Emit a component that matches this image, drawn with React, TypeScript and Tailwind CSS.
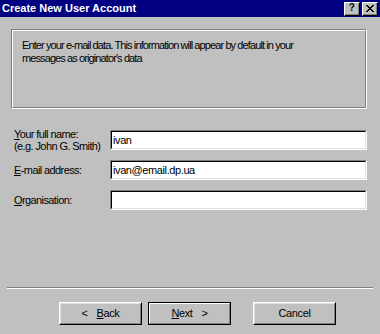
import React from "react";

const font = { fontFamily: '"Liberation Sans", Arial, sans-serif' };

function Field({ value }: { value?: string }) {
  return (
    <div className="flex-1 h-[20px] border-t border-l border-[#808080] border-b-white border-r-white border-b border-r">
      <div className="h-full border-t border-l border-black border-b border-r border-b-[#dfdfdf] border-r-[#dfdfdf] bg-white pl-[1px] flex items-center text-[11px] text-black tracking-[-0.4px]">
        {value}
      </div>
    </div>
  );
}

function Button({ children, primary }: { children: React.ReactNode; primary?: boolean }) {
  const face = (
    <div className="h-full border-t border-l border-white border-b border-r border-b-black border-r-black">
      <div className="h-full border-t border-l border-[#dfdfdf] border-b border-r border-b-[#808080] border-r-[#808080] flex items-center justify-center text-[11px] text-black">
        {children}
      </div>
    </div>
  );
  return (
    <div className={`w-[83px] h-[23px] ${primary ? "border border-black" : ""}`}>
      {primary ? (
        <div className="h-full border-t border-l border-white border-b border-r border-b-[#808080] border-r-[#808080]">
          <div className="h-full flex items-center justify-center text-[11px] text-black bg-[#c0c0c0]">{children}</div>
        </div>
      ) : (
        face
      )}
    </div>
  );
}

function CaptionButton({ children }: { children: React.ReactNode }) {
  return (
    <div className="w-[16px] h-[14px] bg-[#c0c0c0] border-t border-l border-white border-b border-r border-b-black border-r-black">
      <div className="h-full border-b border-r border-[#808080] flex items-center justify-center text-[10px] font-bold leading-none text-black">
        {children}
      </div>
    </div>
  );
}

export default function App() {
  return (
    <div className="w-[380px] h-[334px] bg-[#c0c0c0] flex flex-col overflow-hidden tracking-[-0.4px]" style={font}>
      {/* Title bar */}
      <div className="shrink-0 h-[17px] bg-[#000080] flex items-center justify-between pl-[2px] pr-[2px]">
        <span className="text-white font-bold text-[11px] leading-none tracking-normal">Create New User Account</span>
        <div className="flex items-center gap-[2px]">
          <CaptionButton>?</CaptionButton>
          <CaptionButton>
            <svg width="8" height="7" viewBox="0 0 8 7">
              <path d="M0 0h2v1h1v1h2v-1h1v-1h2v1h-1v1h-1v1h-1v1h1v1h1v1h1v1h-2v-1h-1v-1h-2v1h-1v1h-2v-1h1v-1h1v-1h1v-1h-1v-1h-1v-1h-1z" fill="black" />
            </svg>
          </CaptionButton>
        </div>
      </div>

      {/* Info panel */}
      <div className="shrink-0 mt-[12px] ml-[11px] w-[356px] h-[80px] border-t border-l border-[#808080] border-b border-r border-b-white border-r-white">
        <div className="h-full border-t border-l border-white border-b border-r border-b-[#808080] border-r-[#808080] pl-[9px] pt-[8px] text-[11px] leading-[13px] text-black tracking-[-0.9px]">
          Enter your e-mail data. This information will appear by default in your
          <br />
          messages as originator's data
        </div>
      </div>

      {/* Form */}
      <div className="shrink-0 mt-[21px] flex flex-col gap-[10px] pl-[14px] pr-[13px] text-[11px] text-black tracking-[-0.6px]">
        <div className="h-[20px] flex items-center">
          <div className="w-[96px] shrink-0 leading-[12px] whitespace-nowrap">
            <span className="underline">Y</span>our full name:
            <br />
            (e.g. John G. Smith)
          </div>
          <Field value="ivan" />
        </div>
        <div className="h-[20px] flex items-center">
          <div className="w-[96px] shrink-0 whitespace-nowrap">
            <span className="underline">E</span>-mail address:
          </div>
          <Field value="ivan@email.dp.ua" />
        </div>
        <div className="h-[20px] flex items-center">
          <div className="w-[96px] shrink-0 whitespace-nowrap">
            <span className="underline">O</span>rganisation:
          </div>
          <Field />
        </div>
      </div>

      {/* Separator */}
      <div className="shrink-0 mt-[77px] mx-[7px] border-t border-[#808080] border-b border-b-white" />

      {/* Buttons */}
      <div className="shrink-0 mt-[13px] flex pl-[59px]">
        <Button>
          <span className="mr-[9px]">&lt;</span>
          <span>
            <span className="underline">B</span>ack
          </span>
        </Button>
        <div className="ml-[6px]">
          <Button primary>
            <span>
              <span className="underline">N</span>ext
            </span>
            <span className="ml-[9px]">&gt;</span>
          </Button>
        </div>
        <div className="ml-[22px]">
          <Button>Cancel</Button>
        </div>
      </div>
    </div>
  );
}
